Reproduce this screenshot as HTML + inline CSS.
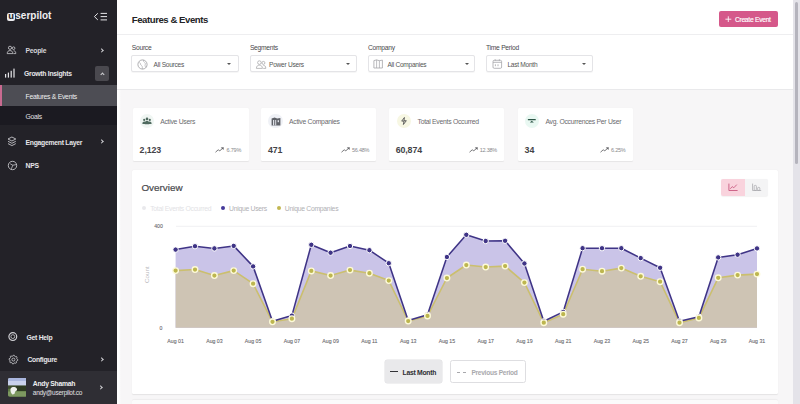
<!DOCTYPE html>
<html><head><meta charset="utf-8">
<style>
*{margin:0;padding:0;box-sizing:border-box}
html,body{width:800px;height:404px;overflow:hidden;background:#f7f6f7;font-family:"Liberation Sans",sans-serif}
.a{position:absolute;white-space:nowrap}
#side{position:absolute;left:0;top:0;width:117px;height:404px;background:#232228}
.mi{position:absolute;left:25.6px;font-size:6.8px;letter-spacing:-0.04em;font-weight:bold;color:#e6e6e9;line-height:8px;margin-top:0.3px}
.chev{position:absolute;width:3.2px;height:3.2px;border-right:1px solid #cfcfd3;border-top:1px solid #cfcfd3;transform:rotate(45deg)}
.lbl{position:absolute;font-size:6.7px;letter-spacing:-0.04em;color:#48484c;line-height:8px;top:43.9px}
.dd{position:absolute;top:55.2px;width:107.2px;height:16.8px;border:1px solid #e4e4e7;border-radius:2px;background:#fff;box-shadow:0 0.6px 0.8px rgba(0,0,0,0.04)}
.dd .t{position:absolute;top:5.1px;font-size:6.59px;letter-spacing:-0.04em;color:#555;line-height:8px;white-space:nowrap}
.caret{position:absolute;top:6.7px;width:0;height:0;border-left:2.2px solid transparent;border-right:2.2px solid transparent;border-top:2.4px solid #555}
.card{position:absolute;top:107.8px;width:115.4px;height:52.8px;background:#fff;border-radius:1.2px;box-shadow:0 0.6px 1px rgba(0,0,0,0.07)}
.cl2{top:117.8px;font-size:6.8px;letter-spacing:-0.04em;color:#6a6a6e;line-height:8px}
.num2{top:145.3px;font-size:8.8px;font-weight:bold;color:#434347;line-height:11px;letter-spacing:-0.1px}
.pct2{top:146.6px;font-size:5.5px;letter-spacing:-0.04em;color:#88888c;line-height:7px}
</style></head><body>

<div id="side">
  <!-- logo -->
  <div class="a" style="left:7.3px;top:12.9px;width:7.6px;height:8px;border-radius:2px;background:#ececef"></div>
  <div class="a" style="left:8.2px;top:9.8px;font-size:9.4px;font-weight:bold;color:#232228;line-height:12px">u</div>
  <div class="a" style="left:15.3px;top:10px;font-size:10px;font-weight:bold;color:#f0f0f2;line-height:12px">serpilot</div>
  <!-- collapse icon -->
  <svg class="a" style="left:92px;top:11px" width="18" height="12" viewBox="0 0 18 12">
    <polyline points="5.8,2.3 2.4,5.6 5.8,8.9" fill="none" stroke="#e6e6e9" stroke-width="1"/>
    <line x1="8.6" y1="2.4" x2="15" y2="2.4" stroke="#e6e6e9" stroke-width="1"/>
    <line x1="8.6" y1="5.6" x2="15" y2="5.6" stroke="#e6e6e9" stroke-width="1"/>
    <line x1="8.6" y1="8.9" x2="15" y2="8.9" stroke="#e6e6e9" stroke-width="1"/>
  </svg>

  <!-- People -->
  <svg class="a" style="left:6px;top:45.4px" width="11" height="10" viewBox="0 0 11 10">
    <circle cx="4" cy="2.8" r="1.6" fill="none" stroke="#d8d8dc" stroke-width="0.75"/>
    <path d="M1.2,8.6 C1.2,6.3 2.5,5.6 4,5.6 C5.5,5.6 6.8,6.3 6.8,8.6 Z" fill="none" stroke="#d8d8dc" stroke-width="0.75"/>
    <circle cx="7.6" cy="3.2" r="1.3" fill="none" stroke="#d8d8dc" stroke-width="0.75"/>
    <path d="M7.6,5.8 C8.9,5.8 9.8,6.5 9.8,8.6 L7.4,8.6" fill="none" stroke="#d8d8dc" stroke-width="0.75"/>
  </svg>
  <div class="mi" style="top:47.1px;color:#d4d4d8">People</div>
  <div class="chev" style="left:99.6px;top:48.6px"></div>

  <!-- Growth Insights -->
  <svg class="a" style="left:4px;top:67px" width="13" height="12" viewBox="0 0 13 12">
    <rect x="1" y="7" width="1.2" height="3.6" fill="#e6e6e9"/>
    <rect x="3.8" y="5.6" width="1.2" height="5" fill="#e6e6e9"/>
    <rect x="6.6" y="3.8" width="1.2" height="6.8" fill="#e6e6e9"/>
    <rect x="9.4" y="1.6" width="1.2" height="9" fill="#e6e6e9"/>
  </svg>
  <div class="mi" style="left:24px;top:69.6px">Growth Insights</div>
  <div class="a" style="left:94.9px;top:65.9px;width:14px;height:15px;background:#4a494f;border-radius:2px"></div>
  <div class="chev" style="left:100.5px;top:72.6px;transform:rotate(-45deg)"></div>

  <!-- Features & Events active -->
  <div class="a" style="left:0;top:85.2px;width:117px;height:20.5px;background:#4d4d54"></div>
  <div class="a" style="left:0;top:85.2px;width:2.2px;height:20.5px;background:#c96a90"></div>
  <div class="mi" style="top:92.3px;font-weight:normal;color:#ededf0">Features &amp; Events</div>

  <!-- Goals -->
  <div class="a" style="left:0;top:105.7px;width:117px;height:19.5px;background:#1b1a21"></div>
  <div class="mi" style="top:112.4px;font-weight:normal;color:#e0e0e4">Goals</div>

  <!-- Engagement Layer -->
  <svg class="a" style="left:5.5px;top:136px" width="12" height="11" viewBox="0 0 12 11">
    <path d="M5.9,1 L9.8,3 L5.9,5 L2,3 Z" fill="none" stroke="#d8d8dc" stroke-width="0.8"/>
    <path d="M2,5.3 L5.9,7.3 L9.8,5.3" fill="none" stroke="#d8d8dc" stroke-width="0.8"/>
    <path d="M2,7.6 L5.9,9.6 L9.8,7.6" fill="none" stroke="#d8d8dc" stroke-width="0.8"/>
  </svg>
  <div class="mi" style="top:138.6px">Engagement Layer</div>
  <div class="chev" style="left:99.6px;top:140.3px"></div>

  <!-- NPS -->
  <svg class="a" style="left:5.5px;top:159px" width="13" height="13" viewBox="0 0 13 13">
    <circle cx="6.5" cy="6.5" r="4.2" fill="none" stroke="#d8d8dc" stroke-width="0.8"/>
    <path d="M4.2,4.8 L6.8,6.2 L5.4,9.8 M6.8,6.2 L10.4,5.6" fill="none" stroke="#d8d8dc" stroke-width="0.7"/>
  </svg>
  <div class="mi" style="top:161.3px">NPS</div>

  <!-- Get Help -->
  <svg class="a" style="left:6px;top:329.5px" width="14" height="13" viewBox="0 0 14 13">
    <circle cx="6.8" cy="6.6" r="3.9" fill="none" stroke="#cfcfd3" stroke-width="1.2"/>
    <circle cx="6.8" cy="6.6" r="1.9" fill="#232228" stroke="#cfcfd3" stroke-width="0.8"/>
    <circle cx="6.8" cy="6.6" r="0.8" fill="#111"/>
  </svg>
  <div class="mi" style="left:26.6px;top:333.6px">Get Help</div>

  <!-- Configure -->
  <svg class="a" style="left:6px;top:353px" width="14" height="13" viewBox="0 0 14 13">
    <path d="M11.80,6.60 L11.72,7.46 L10.63,7.94 L10.31,8.54 L10.51,9.71 L9.84,10.26 L8.74,9.83 L8.08,10.03 L7.40,11.00 L6.54,10.92 L6.06,9.83 L5.46,9.51 L4.29,9.71 L3.74,9.04 L4.17,7.94 L3.97,7.28 L3.00,6.60 L3.08,5.74 L4.17,5.26 L4.49,4.66 L4.29,3.49 L4.96,2.94 L6.06,3.37 L6.72,3.17 L7.40,2.20 L8.26,2.28 L8.74,3.37 L9.34,3.69 L10.51,3.49 L11.06,4.16 L10.63,5.26 L10.83,5.92 Z" fill="none" stroke="#cfcfd3" stroke-width="0.8" stroke-linejoin="round"/>
    <circle cx="7.4" cy="6.6" r="1.5" fill="none" stroke="#cfcfd3" stroke-width="0.8"/>
  </svg>
  <div class="mi" style="left:27.4px;top:356.1px">Configure</div>
  <div class="chev" style="left:99.9px;top:357.9px"></div>

  <!-- user -->
  <div class="a" style="left:0;top:370.5px;width:117px;height:33.5px;background:#2f2e34"></div>
  <svg class="a" style="left:7.5px;top:378.2px" width="18.7" height="18.8" viewBox="0 0 18.7 18.8">
    <defs><clipPath id="av"><rect x="0" y="0" width="18.7" height="18.8" rx="2"/></clipPath></defs>
    <g clip-path="url(#av)">
      <rect x="0" y="0" width="18.7" height="18.8" fill="#5d7a45"/>
      <rect x="0" y="0" width="18.7" height="8" fill="#c9d1ec"/>
      <rect x="0" y="0" width="18.7" height="3" fill="#aab6de"/>
      <rect x="0" y="7.4" width="18.7" height="3.4" fill="#3e4d2e"/>
      <rect x="8" y="8" width="10.7" height="5" fill="#2e3a22"/>
      <rect x="0" y="13.5" width="18.7" height="5.3" fill="#7d9860"/>
      <path d="M2.5,11 C3.5,8.5 7,8.6 8.8,10.4 C9.6,11.4 8.6,13 7.2,13.4 L6.4,16 L4.2,16.4 C3.2,15 2,13 2.5,11 Z" fill="#eef0ec"/>
    </g>
  </svg>
  <div class="mi" style="left:32.8px;top:380px;color:#eeeef1">Andy Shamah</div>
  <div class="mi" style="left:32.8px;top:388.8px;font-weight:normal;font-size:6.48px;letter-spacing:-0.04em;color:#e2e2e6">andy@userpilot.co</div>
  <div class="chev" style="left:98.9px;top:386px"></div>
</div>

<!-- left shadow strip -->
<div class="a" style="left:117px;top:0;width:4px;height:404px;background:linear-gradient(90deg,#ffffff 40%,#f7f6f7)"></div>

<!-- header -->
<div class="a" style="left:117px;top:0;width:675.5px;height:89px;background:#fff"></div>
<div class="a" style="left:117px;top:88.6px;width:675.5px;height:1px;background:#e9e9eb"></div>
<div class="a" style="left:117px;top:33.6px;width:675.5px;height:0.7px;background:#eeeef0"></div>
<div class="a" style="left:131.8px;top:13.9px;font-size:9.6px;font-weight:bold;color:#232326;line-height:11px;letter-spacing:-0.45px">Features &amp; Events</div>

<div class="a" style="left:719.3px;top:10.9px;width:59.2px;height:16.2px;background:#d5588a;border-radius:2px"></div>
<svg class="a" style="left:724.5px;top:15.8px" width="7" height="6.5" viewBox="0 0 7 6.5"><path d="M3.3,0.3 V6.2 M0.4,3.2 H6.3" stroke="#fff" stroke-width="0.85"/></svg>
<div class="a" style="left:734.9px;top:15.6px;font-size:6.7px;letter-spacing:-0.04em;color:#fff;line-height:8px;-webkit-text-stroke:0.15px #fff">Create Event</div>

<!-- filters -->
<div class="lbl" style="left:131.8px">Source</div>
<div class="lbl" style="left:249.9px">Segments</div>
<div class="lbl" style="left:368px">Company</div>
<div class="lbl" style="left:486px">Time Period</div>

<div class="dd" style="left:131.4px">
  <svg class="a" style="left:4.8px;top:2.8px" width="11" height="11" viewBox="0 0 11 11">
    <circle cx="5.5" cy="5.5" r="4.6" fill="none" stroke="#9a9a9e" stroke-width="0.8"/>
    <path d="M2.2,3 C4,4 3,6 4.6,6.6 C5.6,7 5,9 5.6,10 M6.4,1 C6,2.6 7.6,3.2 8.2,4.2 C8.8,5.4 7.6,6 8.2,7.4 C8.6,8.2 9.6,8 9.8,7.6" fill="none" stroke="#a0a0a4" stroke-width="0.6"/>
  </svg>
  <div class="t" style="left:21.2px">All Sources</div>
  <div class="caret" style="left:95px"></div>
</div>
<div class="dd" style="left:249.5px">
  <svg class="a" style="left:4px;top:2.6px" width="12" height="11" viewBox="0 0 12 11">
    <circle cx="4.4" cy="3.6" r="1.8" fill="none" stroke="#a0a0a4" stroke-width="0.7"/>
    <path d="M1.4,9.4 C1.4,7 2.8,6.2 4.4,6.2 C6,6.2 7.4,7 7.4,9.4 Z" fill="none" stroke="#a0a0a4" stroke-width="0.7"/>
    <circle cx="8.4" cy="3.9" r="1.5" fill="none" stroke="#a0a0a4" stroke-width="0.7"/>
    <path d="M8.3,6.4 C9.8,6.4 10.8,7.2 10.8,9.4 L8.2,9.4" fill="none" stroke="#a0a0a4" stroke-width="0.7"/>
  </svg>
  <div class="t" style="left:18.6px">Power Users</div>
  <div class="caret" style="left:95.2px"></div>
</div>
<div class="dd" style="left:367.6px">
  <svg class="a" style="left:4.6px;top:2.8px" width="11" height="10" viewBox="0 0 11 10">
    <path d="M0.9,9 V1.6 L3.6,0.9 L6.4,1.7 L9.4,1.1 V9 Z" fill="none" stroke="#a4a4a8" stroke-width="0.8" stroke-linejoin="round"/>
    <path d="M3.6,0.9 V9 M6.4,1.7 V9" fill="none" stroke="#a4a4a8" stroke-width="0.7"/>
  </svg>
  <div class="t" style="left:18.8px">All Companies</div>
  <div class="caret" style="left:96.8px"></div>
</div>
<div class="dd" style="left:486px">
  <svg class="a" style="left:4.8px;top:2.8px" width="11" height="10" viewBox="0 0 11 10">
    <rect x="1" y="1.3" width="8.6" height="8" rx="1.2" fill="none" stroke="#a4a4a8" stroke-width="0.8"/>
    <path d="M1,3.3 H9.6 M3.2,0.3 V1.8 M7.4,0.3 V1.8" fill="none" stroke="#a4a4a8" stroke-width="0.8"/>
    <path d="M3.4,5.3 V7.2 M6,5.3 V7.2" stroke="#a4a4a8" stroke-width="0.8"/>
  </svg>
  <div class="t" style="left:20.4px">Last Month</div>
  <div class="caret" style="left:94.5px"></div>
</div>

<!-- metric cards -->
<div class="card" style="left:133.2px"></div>
<div class="a" style="left:139.60px;top:114.1px;width:14.4px;height:14.4px;border-radius:50%;background:#f0f6f3"></div>
<svg class="a" style="left:141.8px;top:117.4px" width="10" height="8" viewBox="0 0 10 8">
    <circle cx="5" cy="1.9" r="1.3" fill="#4f6a5f"/>
    <circle cx="2.2" cy="2.9" r="1.1" fill="#4f6a5f"/>
    <circle cx="7.8" cy="2.9" r="1.1" fill="#4f6a5f"/>
    <path d="M0.4,7 C0.4,5 1.2,4.4 2.4,4.4 C3.6,4.4 4.4,5 4.4,7 Z M5.6,7 C5.6,5 6.4,4.4 7.6,4.4 C8.8,4.4 9.6,5 9.6,7 Z M2.8,7.2 C2.8,4.6 3.8,3.8 5,3.8 C6.2,3.8 7.2,4.6 7.2,7.2 Z" fill="#4f6a5f"/>
  </svg>
<div class="a cl2" style="left:160.20px">Active Users</div>
<div class="a num2" style="left:139.60px">2,123</div>
<div class="a pct2" style="left:226.60px">6.79%</div>
<svg class="a" style="left:215.40px;top:146.8px" width="10" height="6" viewBox="0 0 10 6"><path d="M0.5,5.2 L3.2,2.8 L4.8,3.8 L7.6,1.3" fill="none" stroke="#5e5e62" stroke-width="0.85"/><path d="M5.8,0.6 L8.8,0.2 L8.5,3.1 Z" fill="#5e5e62"/></svg>
<div class="card" style="left:260.8px"></div>
<div class="a" style="left:268.30px;top:114.1px;width:14.4px;height:14.4px;border-radius:50%;background:#eff1f6"></div>
<svg class="a" style="left:270.6px;top:116.8px" width="10" height="9" viewBox="0 0 10 9">
    <path d="M0.6,8.4 V1.6 L3.6,0.6 L6.2,1.4 L9.4,1 V8.4 Z" fill="#5f6268"/>
    <rect x="2" y="3" width="1.2" height="5.4" fill="#dfe2e8"/>
    <rect x="4.2" y="3" width="1" height="5.4" fill="#dfe2e8"/>
    <rect x="6.6" y="3.2" width="1.4" height="2" fill="#dfe2e8"/>
  </svg>
<div class="a cl2" style="left:289.10px">Active Companies</div>
<div class="a num2" style="left:268.00px">471</div>
<div class="a pct2" style="left:351.90px">56.48%</div>
<svg class="a" style="left:340.70px;top:146.8px" width="10" height="6" viewBox="0 0 10 6"><path d="M0.5,5.2 L3.2,2.8 L4.8,3.8 L7.6,1.3" fill="none" stroke="#5e5e62" stroke-width="0.85"/><path d="M5.8,0.6 L8.8,0.2 L8.5,3.1 Z" fill="#5e5e62"/></svg>
<div class="card" style="left:388.6px"></div>
<div class="a" style="left:396.50px;top:114.1px;width:14.4px;height:14.4px;border-radius:50%;background:#f7f7e3"></div>
<svg class="a" style="left:399.6px;top:117.2px" width="8" height="8" viewBox="0 0 8 8">
    <path d="M4.4,0.5 L1.7,4.1 H4 L3.4,7.5 L6.3,3.7 H4 Z" fill="none" stroke="#3a3a3e" stroke-width="0.75" stroke-linejoin="round"/>
  </svg>
<div class="a cl2" style="left:417.50px">Total Events Occurred</div>
<div class="a num2" style="left:395.70px">60,874</div>
<div class="a pct2" style="left:479.70px">12.38%</div>
<svg class="a" style="left:468.50px;top:146.8px" width="10" height="6" viewBox="0 0 10 6"><path d="M0.5,5.2 L3.2,2.8 L4.8,3.8 L7.6,1.3" fill="none" stroke="#5e5e62" stroke-width="0.85"/><path d="M5.8,0.6 L8.8,0.2 L8.5,3.1 Z" fill="#5e5e62"/></svg>
<div class="card" style="left:517.6px"></div>
<div class="a" style="left:525.10px;top:114.1px;width:14.4px;height:14.4px;border-radius:50%;background:#e9f8f2"></div>
<svg class="a" style="left:527.4px;top:117.8px" width="10" height="7" viewBox="0 0 10 7">
    <rect x="0.8" y="1.1" width="8" height="1.1" rx="0.5" fill="#2c5546"/>
    <path d="M2.8,4.6 L4.8,2.8 L6.8,4.6 Z" fill="#2c5546"/>
  </svg>
<div class="a cl2" style="left:545.40px">Avg. Occurrences Per User</div>
<div class="a num2" style="left:524.60px">34</div>
<div class="a pct2" style="left:611.00px">6.25%</div>
<svg class="a" style="left:599.80px;top:146.8px" width="10" height="6" viewBox="0 0 10 6"><path d="M0.5,5.2 L3.2,2.8 L4.8,3.8 L7.6,1.3" fill="none" stroke="#5e5e62" stroke-width="0.85"/><path d="M5.8,0.6 L8.8,0.2 L8.5,3.1 Z" fill="#5e5e62"/></svg>

<!-- overview card -->
<div class="a" style="left:131.8px;top:169.5px;width:646.4px;height:224.3px;background:#fff;border-radius:1.5px;box-shadow:0 0.6px 1.2px rgba(0,0,0,0.08)"></div>
<div class="a" style="left:131.8px;top:400.4px;width:646.4px;height:10px;background:#fbfbfb;border-radius:1.5px;box-shadow:0 -0.5px 1px rgba(0,0,0,0.04)"></div>
<div class="a" style="left:141.4px;top:182.2px;font-size:9.9px;color:#48484c;line-height:12px;letter-spacing:0px;-webkit-text-stroke:0.2px #48484c">Overview</div>

<div class="a" style="left:720.8px;top:179.1px;width:47.7px;height:16.5px;background:#f4f4f5;border-radius:2px;box-shadow:0 0.5px 1px rgba(0,0,0,0.05)"></div>
<div class="a" style="left:720.8px;top:179.1px;width:23.8px;height:16.5px;background:#f9d3dd;border-radius:2px 0 0 2px"></div>
<svg class="a" style="left:727px;top:182px" width="12" height="10" viewBox="0 0 12 10">
  <path d="M1.9,1.6 V8.5 H10.6" fill="none" stroke="#c8587f" stroke-width="0.9"/>
  <path d="M3.3,6.8 L5.2,4.6 L6.8,5.8 L9.8,2.6" fill="none" stroke="#c8587f" stroke-width="0.85"/>
</svg>
<svg class="a" style="left:751px;top:182px" width="12" height="10" viewBox="0 0 12 10">
  <path d="M1.6,1.6 V8.5 H10.2" fill="none" stroke="#a6a6aa" stroke-width="0.75"/>
  <rect x="3.2" y="3.4" width="2.2" height="5" rx="0.8" fill="none" stroke="#a6a6aa" stroke-width="0.7"/>
  <rect x="6.6" y="5.4" width="2.2" height="3" rx="0.8" fill="none" stroke="#a6a6aa" stroke-width="0.7"/>
</svg>

<!-- legend -->
<div class="a" style="left:141.7px;top:206.1px;width:4.4px;height:4.4px;border-radius:50%;background:#e9e9ec"></div>
<div class="a" style="left:150.2px;top:204.8px;font-size:6.8px;letter-spacing:-0.04em;color:#e2e2e5;line-height:8px">Total Events Occurred</div>
<div class="a" style="left:220.8px;top:205.9px;width:4.6px;height:4.6px;border-radius:50%;background:#45399a"></div>
<div class="a" style="left:229px;top:204.8px;font-size:6.8px;letter-spacing:-0.04em;color:#b0b0b4;line-height:8px">Unique Users</div>
<div class="a" style="left:276.9px;top:205.9px;width:4.6px;height:4.6px;border-radius:50%;background:#c2b752"></div>
<div class="a" style="left:284.8px;top:204.8px;font-size:6.8px;letter-spacing:-0.04em;color:#b0b0b4;line-height:8px">Unique Companies</div>

<!-- chart -->
<svg class="a" style="left:0;top:0" width="800" height="404" viewBox="0 0 800 404">
<line x1="176" y1="226.3" x2="757" y2="226.3" stroke="#ececef" stroke-width="0.8"/>
<path d="M175.6,327.8 L175.6,249.6 L195.0,246.2 L214.4,248.4 L233.7,245.9 L253.1,266.4 L272.5,321.3 L291.9,315.6 L311.3,244.8 L330.6,252.7 L350.0,246.0 L369.4,250.2 L388.8,263.2 L408.2,320.5 L427.5,314.7 L446.9,257.0 L466.3,234.8 L485.7,241.0 L505.1,240.8 L524.4,263.5 L543.8,321.3 L563.2,311.9 L582.6,248.2 L602.0,248.2 L621.3,248.2 L640.7,258.1 L660.1,267.8 L679.5,321.3 L698.9,316.7 L718.2,257.4 L737.6,254.7 L757.0,248.4 L757.0,327.8 Z" fill="#cac4e8"/>
<path d="M175.6,327.8 L175.6,270.6 L195.0,269.5 L214.4,275.5 L233.7,270.6 L253.1,283.7 L272.5,321.8 L291.9,318.7 L311.3,270.9 L330.6,275.5 L350.0,270.1 L369.4,273.2 L388.8,280.6 L408.2,321.0 L427.5,315.9 L446.9,278.0 L466.3,265.0 L485.7,267.0 L505.1,266.1 L524.4,282.6 L543.8,322.7 L563.2,314.2 L582.6,269.2 L602.0,271.2 L621.3,268.1 L640.7,276.3 L660.1,281.7 L679.5,322.7 L698.9,317.9 L718.2,277.8 L737.6,275.1 L757.0,274.1 L757.0,327.8 Z" fill="#cec4b4"/>
<polyline points="175.6,270.6 195.0,269.5 214.4,275.5 233.7,270.6 253.1,283.7 272.5,321.8 291.9,318.7 311.3,270.9 330.6,275.5 350.0,270.1 369.4,273.2 388.8,280.6 408.2,321.0 427.5,315.9 446.9,278.0 466.3,265.0 485.7,267.0 505.1,266.1 524.4,282.6 543.8,322.7 563.2,314.2 582.6,269.2 602.0,271.2 621.3,268.1 640.7,276.3 660.1,281.7 679.5,322.7 698.9,317.9 718.2,277.8 737.6,275.1 757.0,274.1" fill="none" stroke="#cbbf6e" stroke-width="1.6" stroke-linejoin="round"/>
<polyline points="175.6,249.6 195.0,246.2 214.4,248.4 233.7,245.9 253.1,266.4 272.5,321.3 291.9,315.6 311.3,244.8 330.6,252.7 350.0,246.0 369.4,250.2 388.8,263.2 408.2,320.5 427.5,314.7 446.9,257.0 466.3,234.8 485.7,241.0 505.1,240.8 524.4,263.5 543.8,321.3 563.2,311.9 582.6,248.2 602.0,248.2 621.3,248.2 640.7,258.1 660.1,267.8 679.5,321.3 698.9,316.7 718.2,257.4 737.6,254.7 757.0,248.4" fill="none" stroke="#3f3486" stroke-width="1.55" stroke-linejoin="round"/>
<circle cx="175.6" cy="249.6" r="2.7" fill="#3f3486" stroke="#fff" stroke-width="1"/>
<circle cx="195.0" cy="246.2" r="2.7" fill="#3f3486" stroke="#fff" stroke-width="1"/>
<circle cx="214.4" cy="248.4" r="2.7" fill="#3f3486" stroke="#fff" stroke-width="1"/>
<circle cx="233.7" cy="245.9" r="2.7" fill="#3f3486" stroke="#fff" stroke-width="1"/>
<circle cx="253.1" cy="266.4" r="2.7" fill="#3f3486" stroke="#fff" stroke-width="1"/>
<circle cx="272.5" cy="321.3" r="2.7" fill="#3f3486" stroke="#fff" stroke-width="1"/>
<circle cx="291.9" cy="315.6" r="2.7" fill="#3f3486" stroke="#fff" stroke-width="1"/>
<circle cx="311.3" cy="244.8" r="2.7" fill="#3f3486" stroke="#fff" stroke-width="1"/>
<circle cx="330.6" cy="252.7" r="2.7" fill="#3f3486" stroke="#fff" stroke-width="1"/>
<circle cx="350.0" cy="246.0" r="2.7" fill="#3f3486" stroke="#fff" stroke-width="1"/>
<circle cx="369.4" cy="250.2" r="2.7" fill="#3f3486" stroke="#fff" stroke-width="1"/>
<circle cx="388.8" cy="263.2" r="2.7" fill="#3f3486" stroke="#fff" stroke-width="1"/>
<circle cx="408.2" cy="320.5" r="2.7" fill="#3f3486" stroke="#fff" stroke-width="1"/>
<circle cx="427.5" cy="314.7" r="2.7" fill="#3f3486" stroke="#fff" stroke-width="1"/>
<circle cx="446.9" cy="257.0" r="2.7" fill="#3f3486" stroke="#fff" stroke-width="1"/>
<circle cx="466.3" cy="234.8" r="2.7" fill="#3f3486" stroke="#fff" stroke-width="1"/>
<circle cx="485.7" cy="241.0" r="2.7" fill="#3f3486" stroke="#fff" stroke-width="1"/>
<circle cx="505.1" cy="240.8" r="2.7" fill="#3f3486" stroke="#fff" stroke-width="1"/>
<circle cx="524.4" cy="263.5" r="2.7" fill="#3f3486" stroke="#fff" stroke-width="1"/>
<circle cx="543.8" cy="321.3" r="2.7" fill="#3f3486" stroke="#fff" stroke-width="1"/>
<circle cx="563.2" cy="311.9" r="2.7" fill="#3f3486" stroke="#fff" stroke-width="1"/>
<circle cx="582.6" cy="248.2" r="2.7" fill="#3f3486" stroke="#fff" stroke-width="1"/>
<circle cx="602.0" cy="248.2" r="2.7" fill="#3f3486" stroke="#fff" stroke-width="1"/>
<circle cx="621.3" cy="248.2" r="2.7" fill="#3f3486" stroke="#fff" stroke-width="1"/>
<circle cx="640.7" cy="258.1" r="2.7" fill="#3f3486" stroke="#fff" stroke-width="1"/>
<circle cx="660.1" cy="267.8" r="2.7" fill="#3f3486" stroke="#fff" stroke-width="1"/>
<circle cx="679.5" cy="321.3" r="2.7" fill="#3f3486" stroke="#fff" stroke-width="1"/>
<circle cx="698.9" cy="316.7" r="2.7" fill="#3f3486" stroke="#fff" stroke-width="1"/>
<circle cx="718.2" cy="257.4" r="2.7" fill="#3f3486" stroke="#fff" stroke-width="1"/>
<circle cx="737.6" cy="254.7" r="2.7" fill="#3f3486" stroke="#fff" stroke-width="1"/>
<circle cx="757.0" cy="248.4" r="2.7" fill="#3f3486" stroke="#fff" stroke-width="1"/>
<circle cx="175.6" cy="270.6" r="2.8" fill="#bdb64f" stroke="#fdfad8" stroke-width="1.35"/>
<circle cx="195.0" cy="269.5" r="2.8" fill="#bdb64f" stroke="#fdfad8" stroke-width="1.35"/>
<circle cx="214.4" cy="275.5" r="2.8" fill="#bdb64f" stroke="#fdfad8" stroke-width="1.35"/>
<circle cx="233.7" cy="270.6" r="2.8" fill="#bdb64f" stroke="#fdfad8" stroke-width="1.35"/>
<circle cx="253.1" cy="283.7" r="2.8" fill="#bdb64f" stroke="#fdfad8" stroke-width="1.35"/>
<circle cx="272.5" cy="321.8" r="2.8" fill="#bdb64f" stroke="#fdfad8" stroke-width="1.35"/>
<circle cx="291.9" cy="318.7" r="2.8" fill="#bdb64f" stroke="#fdfad8" stroke-width="1.35"/>
<circle cx="311.3" cy="270.9" r="2.8" fill="#bdb64f" stroke="#fdfad8" stroke-width="1.35"/>
<circle cx="330.6" cy="275.5" r="2.8" fill="#bdb64f" stroke="#fdfad8" stroke-width="1.35"/>
<circle cx="350.0" cy="270.1" r="2.8" fill="#bdb64f" stroke="#fdfad8" stroke-width="1.35"/>
<circle cx="369.4" cy="273.2" r="2.8" fill="#bdb64f" stroke="#fdfad8" stroke-width="1.35"/>
<circle cx="388.8" cy="280.6" r="2.8" fill="#bdb64f" stroke="#fdfad8" stroke-width="1.35"/>
<circle cx="408.2" cy="321.0" r="2.8" fill="#bdb64f" stroke="#fdfad8" stroke-width="1.35"/>
<circle cx="427.5" cy="315.9" r="2.8" fill="#bdb64f" stroke="#fdfad8" stroke-width="1.35"/>
<circle cx="446.9" cy="278.0" r="2.8" fill="#bdb64f" stroke="#fdfad8" stroke-width="1.35"/>
<circle cx="466.3" cy="265.0" r="2.8" fill="#bdb64f" stroke="#fdfad8" stroke-width="1.35"/>
<circle cx="485.7" cy="267.0" r="2.8" fill="#bdb64f" stroke="#fdfad8" stroke-width="1.35"/>
<circle cx="505.1" cy="266.1" r="2.8" fill="#bdb64f" stroke="#fdfad8" stroke-width="1.35"/>
<circle cx="524.4" cy="282.6" r="2.8" fill="#bdb64f" stroke="#fdfad8" stroke-width="1.35"/>
<circle cx="543.8" cy="322.7" r="2.8" fill="#bdb64f" stroke="#fdfad8" stroke-width="1.35"/>
<circle cx="563.2" cy="314.2" r="2.8" fill="#bdb64f" stroke="#fdfad8" stroke-width="1.35"/>
<circle cx="582.6" cy="269.2" r="2.8" fill="#bdb64f" stroke="#fdfad8" stroke-width="1.35"/>
<circle cx="602.0" cy="271.2" r="2.8" fill="#bdb64f" stroke="#fdfad8" stroke-width="1.35"/>
<circle cx="621.3" cy="268.1" r="2.8" fill="#bdb64f" stroke="#fdfad8" stroke-width="1.35"/>
<circle cx="640.7" cy="276.3" r="2.8" fill="#bdb64f" stroke="#fdfad8" stroke-width="1.35"/>
<circle cx="660.1" cy="281.7" r="2.8" fill="#bdb64f" stroke="#fdfad8" stroke-width="1.35"/>
<circle cx="679.5" cy="322.7" r="2.8" fill="#bdb64f" stroke="#fdfad8" stroke-width="1.35"/>
<circle cx="698.9" cy="317.9" r="2.8" fill="#bdb64f" stroke="#fdfad8" stroke-width="1.35"/>
<circle cx="718.2" cy="277.8" r="2.8" fill="#bdb64f" stroke="#fdfad8" stroke-width="1.35"/>
<circle cx="737.6" cy="275.1" r="2.8" fill="#bdb64f" stroke="#fdfad8" stroke-width="1.35"/>
<circle cx="757.0" cy="274.1" r="2.8" fill="#bdb64f" stroke="#fdfad8" stroke-width="1.35"/>
<g font-family="Liberation Sans" font-size="5.2" fill="#6a6a6e" stroke="#6a6a6e" stroke-width="0.1">
<text x="175.6" y="342.9" text-anchor="middle">Aug 01</text>
<text x="214.4" y="342.9" text-anchor="middle">Aug 03</text>
<text x="253.1" y="342.9" text-anchor="middle">Aug 05</text>
<text x="291.9" y="342.9" text-anchor="middle">Aug 07</text>
<text x="330.6" y="342.9" text-anchor="middle">Aug 09</text>
<text x="369.4" y="342.9" text-anchor="middle">Aug 11</text>
<text x="408.2" y="342.9" text-anchor="middle">Aug 13</text>
<text x="446.9" y="342.9" text-anchor="middle">Aug 15</text>
<text x="485.7" y="342.9" text-anchor="middle">Aug 17</text>
<text x="524.4" y="342.9" text-anchor="middle">Aug 19</text>
<text x="563.2" y="342.9" text-anchor="middle">Aug 21</text>
<text x="602.0" y="342.9" text-anchor="middle">Aug 23</text>
<text x="640.7" y="342.9" text-anchor="middle">Aug 25</text>
<text x="679.5" y="342.9" text-anchor="middle">Aug 27</text>
<text x="718.2" y="342.9" text-anchor="middle">Aug 29</text>
<text x="757.0" y="342.9" text-anchor="middle">Aug 31</text>
<text x="162.8" y="228.3" text-anchor="end">400</text>
<text x="162.4" y="329.8" text-anchor="end">0</text>
</g>
<text x="0" y="0" transform="translate(148.6,274.7) rotate(-90)" text-anchor="middle" font-family="Liberation Sans" font-size="6.2" fill="#b8b8bc">Count</text>
</svg>

<!-- bottom buttons -->
<div class="a" style="left:384.7px;top:360.4px;width:57.7px;height:22.3px;background:#e9e9eb;border-radius:2.5px;box-shadow:0 0 0 0.5px #e2e2e4"></div>
<div class="a" style="left:390.2px;top:371px;width:8.3px;height:1.3px;background:#333337"></div>
<div class="a" style="left:402.6px;top:369px;font-size:6.8px;letter-spacing:-0.04em;font-weight:bold;color:#2e2e32;line-height:8px">Last Month</div>
<div class="a" style="left:450.3px;top:360.4px;width:75.3px;height:22.3px;background:#fff;border:0.8px solid #dedee1;border-radius:2.5px"></div>
<div class="a" style="left:456.7px;top:371.8px;width:3.2px;height:1px;background:#a8a8ac"></div>
<div class="a" style="left:462.6px;top:371.8px;width:3.2px;height:1px;background:#a8a8ac"></div>
<div class="a" style="left:471.4px;top:369px;font-size:6.59px;letter-spacing:-0.04em;font-weight:bold;color:#a9a9ad;line-height:8px">Previous Period</div>

<!-- scrollbar -->
<div class="a" style="left:793.2px;top:0;width:6.8px;height:404px;background:#e4e3e9"></div>
<div class="a" style="left:794.7px;top:1.8px;width:3.8px;height:162.4px;background:#b5b4bd;border-radius:1.9px"></div>

</body></html>
